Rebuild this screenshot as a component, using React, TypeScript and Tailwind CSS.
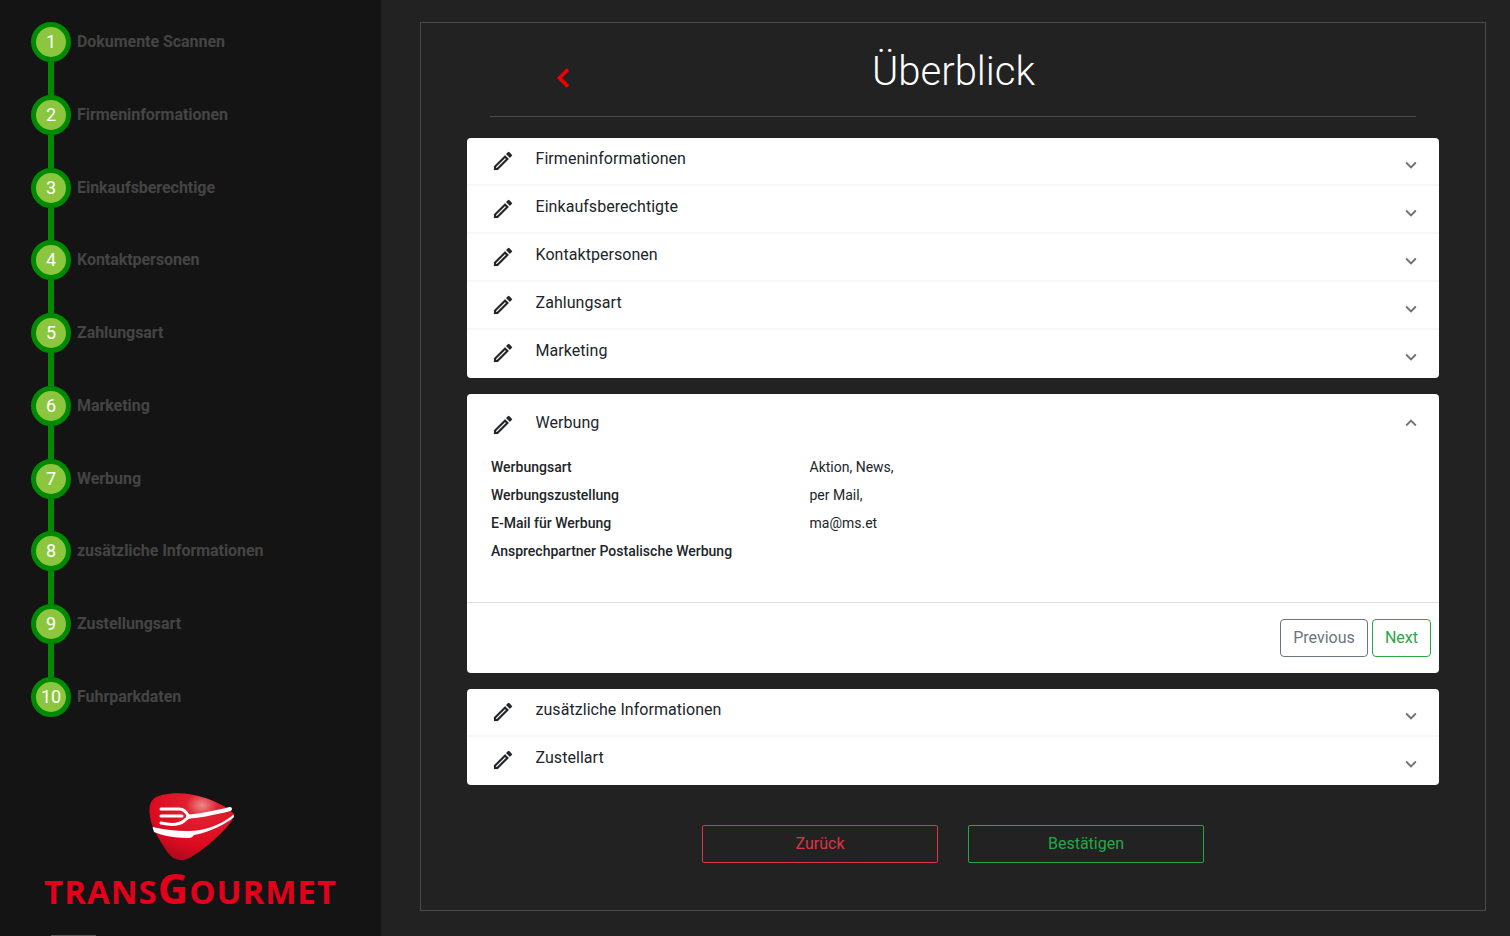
import React from 'react';

const steps = [
  'Dokumente Scannen',
  'Firmeninformationen',
  'Einkaufsberechtige',
  'Kontaktpersonen',
  'Zahlungsart',
  'Marketing',
  'Werbung',
  'zusätzliche Informationen',
  'Zustellungsart',
  'Fuhrparkdaten',
];

const details = [
  ['Werbungsart', 'Aktion, News,'],
  ['Werbungszustellung', 'per Mail,'],
  ['E-Mail für Werbung', 'ma@ms.et'],
  ['Ansprechpartner Postalische Werbung', ''],
];

function PencilIcon() {
  return (
    <svg viewBox="0 0 24 24" className="w-6 h-6 shrink-0 fill-[#212529]">
      <path d="M14.06 9.02l.92.92L5.92 19H5v-.92l9.06-9.06M17.66 3c-.25 0-.51.1-.7.29l-1.83 1.83 3.75 3.75 1.83-1.83c.39-.39.39-1.02 0-1.41l-2.34-2.34c-.2-.2-.45-.29-.71-.29zm-3.6 3.19L3 17.25V21h3.75L17.81 9.94l-3.75-3.75z" stroke="#212529" strokeWidth="0.2" />
    </svg>
  );
}

function Chevron({ up }: { up?: boolean }) {
  return (
    <svg viewBox="0 0 24 24" className="w-[22px] h-[22px] shrink-0 fill-[#6c757d]">
      <path d={up ? 'M12 8l-6 6 1.41 1.41L12 10.83l4.59 4.58L18 14z' : 'M16.59 8.59 12 13.17 7.41 8.59 6 10l6 6 6-6z'} />
    </svg>
  );
}

function AccordionHeader({ title, open, last }: { title: string; open?: boolean; last?: boolean }) {
  return (
    <div className={`flex h-12 pl-6 pr-[17px] ${last || open ? '' : 'border-b-2 border-[#f7f7f7]'}`}>
      <div className={open ? 'mt-[19px]' : 'mt-[11px]'}>
        <PencilIcon />
      </div>
      <span className={`ml-[20.5px] text-base leading-6 tracking-[0.05px] text-[#212529] flex-1 ${open ? 'mt-[17px]' : 'mt-[9px]'}`}>{title}</span>
      <div className={open ? 'mt-[18px]' : 'mt-[16px]'}>
        <Chevron up={open} />
      </div>
    </div>
  );
}

function Logo() {
  return (
    <div className="flex flex-col items-center">
      <svg viewBox="0 0 105 80" className="w-[105px] h-[80px] ml-[4px]">
        <defs>
          <radialGradient id="tgShine" cx="0.62" cy="0.18" r="0.85">
            <stop offset="0" stopColor="#ea8a8a" />
            <stop offset="0.22" stopColor="#e0202f" />
            <stop offset="0.7" stopColor="#dd0a20" />
            <stop offset="1" stopColor="#b00a1c" />
          </radialGradient>
        </defs>
        <path
          d="M9.5 27C9 17 13 12 22 10C35 7 50 8 62 12C75 16 88 22 94 29C95 33 88 42 76 53C65 63 52 73 44 75C37 76 30 72 26 65C19 54 10 42 9.5 27Z"
          fill="url(#tgShine)"
        />
        <g fill="none" stroke="#fff" strokeLinecap="round">
          <path d="M21 24H39C44 24 46 27 48 30" strokeWidth="3" />
          <path d="M21 31H42" strokeWidth="3" />
          <path d="M21 38C30 40 39 40 44 36C47 33 48 32 50 32" strokeWidth="3" />
          <path d="M48 31.5C62 31 78 27 90 24" strokeWidth="4" />
        </g>
        <path
          d="M12.5 42C30 46 48 47 60 45C72 43 85 37 93.5 29.5L94 32C86 39 70 47 54 50C52 53 50 53 47 53C35 53 20 50 14 47Z"
          fill="#fff"
        />
      </svg>
      <div className="mt-[4px] h-[38px] flex items-baseline font-['Open_Sans',sans-serif] font-bold text-[#e2001a] text-[33px] leading-[38px] tracking-[1px]">
        <span>TRANS</span>
        <span className="text-[42px] leading-[38px]">G</span>
        <span>OURMET</span>
      </div>
    </div>
  );
}

export default function App() {
  return (
    <div className="flex h-[936px] w-full overflow-hidden bg-[#222222] font-['Roboto',sans-serif]">
      <aside className="w-[381px] shrink-0 bg-[#141414] flex flex-col pt-[22px]">
        <div className="flex flex-col pl-[31px]">
          {steps.map((step, i) => (
            <div key={step} className="flex">
              <div className="flex flex-col items-center w-10">
                <div className="w-10 h-10 shrink-0 rounded-full border-[5px] border-[#008a00] bg-[#8cc63f] flex items-center justify-center text-white text-lg leading-none">
                  {i + 1}
                </div>
                {i < steps.length - 1 && <div className="w-1.5 h-[32.75px] bg-[#008a00]" />}
              </div>
              <span className="ml-[6px] mt-[8px] text-base leading-6 font-bold tracking-[-0.05px] text-[#444444]">{step}</span>
            </div>
          ))}
        </div>
        <div className="mt-[68px]">
          <Logo />
        </div>
        <div className="mt-auto ml-[51px] w-[45px] h-px bg-[#555555]" />
      </aside>

      <main className="flex-1 pl-[39px] pr-[24px] pt-[22px]">
        <div className="h-[889px] border border-[#4a4a4a] px-[46px] flex flex-col">
          <header className="mx-[23px] h-[94px] border-b border-[#4a4a4a] flex shrink-0">
            <svg viewBox="0 0 16 24" className="w-4 h-6 mt-[43px] ml-[66px] shrink-0">
              <path d="M12 3.5 3.5 12 12 20.5" fill="none" stroke="#f00000" strokeWidth="3.6" />
            </svg>
            <h1 className="ml-[300px] mt-[23px] text-[40px] leading-[52px] font-light text-white">Überblick</h1>
          </header>

          <section className="mt-[21px] bg-white rounded-[4px]">
            {['Firmeninformationen', 'Einkaufsberechtigte', 'Kontaktpersonen', 'Zahlungsart'].map((t) => (
              <AccordionHeader key={t} title={t} />
            ))}
            <AccordionHeader title="Marketing" last />
          </section>

          <section className="mt-4 bg-white rounded-[4px]">
            <div className="h-[209px] border-b border-[#dfdfdf]">
              <div className="h-[59px]">
                <AccordionHeader title="Werbung" open />
              </div>
              <div className="flex flex-col pl-6">
                {details.map(([label, value]) => (
                  <div key={label} className="flex h-7 items-center text-sm text-[#212529]">
                    <span className="w-[318.5px] font-medium">{label}</span>
                    <span>{value}</span>
                  </div>
                ))}
              </div>
            </div>
            <div className="h-[70px] flex justify-end gap-1 pt-4 pr-2">
              <button className="w-[88px] h-[38px] rounded-[4px] border border-[#6c757d] text-base text-[#6c757d]">Previous</button>
              <button className="w-[59px] h-[38px] rounded-[4px] border border-[#28a745] text-base text-[#28a745]">Next</button>
            </div>
          </section>

          <section className="mt-4 bg-white rounded-[4px]">
            <AccordionHeader title="zusätzliche Informationen" />
            <AccordionHeader title="Zustellart" last />
          </section>

          <div className="mt-10 flex justify-center gap-[30px]">
            <button className="w-[236px] h-[38px] rounded-[2px] border border-[#dc3545] text-base text-[#dc3545]">Zurück</button>
            <button className="w-[236px] h-[38px] rounded-[2px] border border-[#28a745] text-base text-[#28a745]">Bestätigen</button>
          </div>
        </div>
      </main>
    </div>
  );
}
